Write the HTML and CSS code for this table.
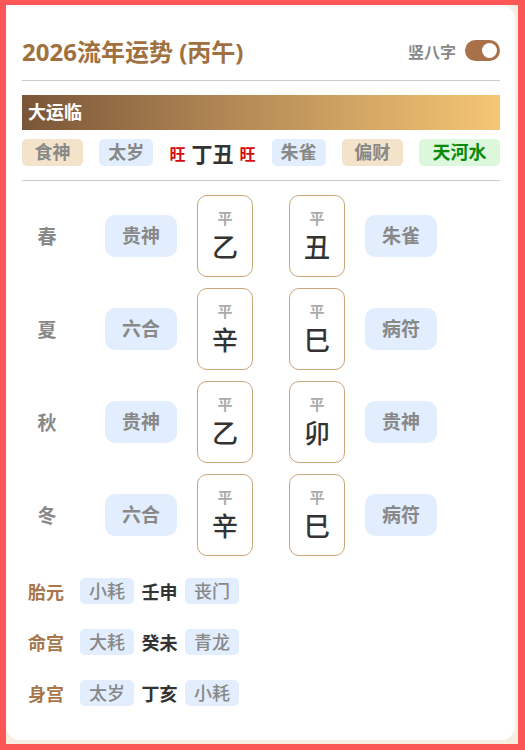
FILE: index.html
```html
<!DOCTYPE html>
<html lang="zh">
<head>
<meta charset="utf-8">
<link rel="stylesheet" href="styles.css">
</head>
<body>
<div class="frame">
  <div class="card">
    <div class="header">
      <div class="title">2026流年运势 (丙午)</div>
      <div class="switch-wrap">
        <span class="switch-label">竖八字</span>
        <span class="switch"><span class="knob"></span></span>
      </div>
    </div>
    <div class="banner">大运临</div>
    <div class="tags">
      <span class="tag beige">食神</span>
      <span class="tag blue">太岁</span>
      <span class="ganzhi"><span class="wang">旺</span><span class="gz">丁丑</span><span class="wang">旺</span></span>
      <span class="tag blue">朱雀</span>
      <span class="tag beige">偏财</span>
      <span class="tag green">天河水</span>
    </div>
    <div class="divider"></div>
    <div class="seasons">
      <div class="row">
        <span class="season">春</span>
        <span class="pill">贵神</span>
        <div class="pillar first"><span class="state">平</span><span class="char">乙</span></div>
        <div class="pillar"><span class="state">平</span><span class="char">丑</span></div>
        <span class="pill right">朱雀</span>
      </div>
      <div class="row">
        <span class="season">夏</span>
        <span class="pill">六合</span>
        <div class="pillar first"><span class="state">平</span><span class="char">辛</span></div>
        <div class="pillar"><span class="state">平</span><span class="char">巳</span></div>
        <span class="pill right">病符</span>
      </div>
      <div class="row">
        <span class="season">秋</span>
        <span class="pill">贵神</span>
        <div class="pillar first"><span class="state">平</span><span class="char">乙</span></div>
        <div class="pillar"><span class="state">平</span><span class="char">卯</span></div>
        <span class="pill right">贵神</span>
      </div>
      <div class="row">
        <span class="season">冬</span>
        <span class="pill">六合</span>
        <div class="pillar first"><span class="state">平</span><span class="char">辛</span></div>
        <div class="pillar"><span class="state">平</span><span class="char">巳</span></div>
        <span class="pill right">病符</span>
      </div>
    </div>
    <div class="palaces">
      <div class="prow"><span class="plabel">胎元</span><span class="ptag">小耗</span><span class="pgz">壬申</span><span class="ptag">丧门</span></div>
      <div class="prow"><span class="plabel">命宫</span><span class="ptag">大耗</span><span class="pgz">癸未</span><span class="ptag">青龙</span></div>
      <div class="prow"><span class="plabel">身宫</span><span class="ptag">太岁</span><span class="pgz">丁亥</span><span class="ptag">小耗</span></div>
    </div>
  </div>
</div>
</body>
</html>
```

FILE: styles.css
```css
* { box-sizing: border-box; }
html, body { margin: 0; padding: 0; }
body {
  font-family: "Noto Sans", "Noto Sans CJK SC", sans-serif;
  background: #fd5656;
}
.frame {
  width: 525px;
  height: 750px;
  border-style: solid;
  border-color: #fd5656;
  border-width: 5px 7px 6px 6px;
  background: #f6eee2;
  overflow: hidden;
}
.card {
  width: 509px;
  height: 735px;
  background: #fff;
  border-radius: 0 14px 14px 14px;
  padding: 0 15px 0 16px;
}
.header {
  height: 76px;
  padding-top: 16px;
  display: flex;
  align-items: center;
  justify-content: space-between;
  border-bottom: 1px solid #cccccc;
}
.title {
  font-size: 24px;
  font-weight: 700;
  color: #a0703f;
}
.switch-wrap {
  display: flex;
  align-items: center;
  gap: 9px;
}
.switch-label {
  font-size: 16px;
  font-weight: 700;
  color: #888;
}
.switch {
  width: 35px;
  height: 21px;
  border-radius: 11px;
  background: #a87149;
  display: flex;
  align-items: center;
  justify-content: flex-end;
  padding-right: 3px;
}
.knob {
  width: 15px;
  height: 15px;
  border-radius: 50%;
  background: #fff;
}
.banner {
  margin-top: 14px;
  height: 35px;
  line-height: 35px;
  padding-left: 6px;
  color: #fff;
  font-size: 18px;
  font-weight: 700;
  background: linear-gradient(90deg, #7a5638 0%, #b48a56 45%, #f5c674 100%);
}
.tags {
  margin-top: 9px;
  height: 27px;
  display: flex;
  align-items: center;
  justify-content: space-between;
}
.tag {
  height: 27px;
  line-height: 27px;
  border-radius: 5px;
  font-size: 18px;
  font-weight: 700;
  color: #888;
  text-align: center;
}
.tag.beige { background: #f2e3ca; width: 61px; }
.tag.blue { background: #e2eefd; width: 54px; }
.tag.green { background: #dcf7dc; color: #0a8a0a; width: 81px; }
.ganzhi {
  display: flex;
  align-items: center;
  gap: 6px;
}
.wang {
  color: #d40a0a;
  font-size: 16px;
  font-weight: 700;
}
.gz {
  color: #333;
  font-size: 21px;
  font-weight: 700;
}
.divider {
  margin-top: 14px;
  height: 1px;
  background: #cccccc;
}
.seasons {
  margin-top: 14px;
  display: flex;
  flex-direction: column;
  gap: 11px;
}
.row {
  display: flex;
  align-items: center;
  height: 82px;
}
.season {
  width: 50px;
  text-align: center;
  font-size: 19px;
  font-weight: 700;
  color: #888;
}
.pill {
  margin-left: 33px;
  width: 72px;
  height: 42px;
  line-height: 42px;
  border-radius: 10px;
  background: #e2eefd;
  color: #888;
  font-size: 19px;
  font-weight: 700;
  text-align: center;
}
.pill.right { margin-left: 20px; }
.pillar {
  width: 56px;
  height: 82px;
  margin-left: 36px;
  border: 1px solid #caa578;
  border-radius: 10px;
  display: flex;
  flex-direction: column;
  align-items: center;
  padding-top: 12px;
}
.pillar.first { margin-left: 20px; }
.state {
  font-size: 15px;
  line-height: 20px;
  color: #aaa;
  font-weight: 700;
}
.char {
  margin-top: 3px;
  font-size: 26px;
  line-height: 32px;
  color: #333;
  font-weight: 500;
}
.palaces {
  margin-top: 22px;
  display: flex;
  flex-direction: column;
  gap: 25px;
}
.prow {
  display: flex;
  align-items: center;
  height: 26px;
}
.plabel {
  width: 58px;
  padding-left: 6px;
  font-size: 18px;
  font-weight: 700;
  color: #a8764a;
}
.ptag {
  width: 54px;
  height: 26px;
  line-height: 26px;
  border-radius: 5px;
  background: #e2eefd;
  color: #888;
  font-size: 18px;
  font-weight: 500;
  text-align: center;
}
.pgz {
  width: 51px;
  text-align: center;
  font-size: 18px;
  font-weight: 700;
  color: #333;
}
```
